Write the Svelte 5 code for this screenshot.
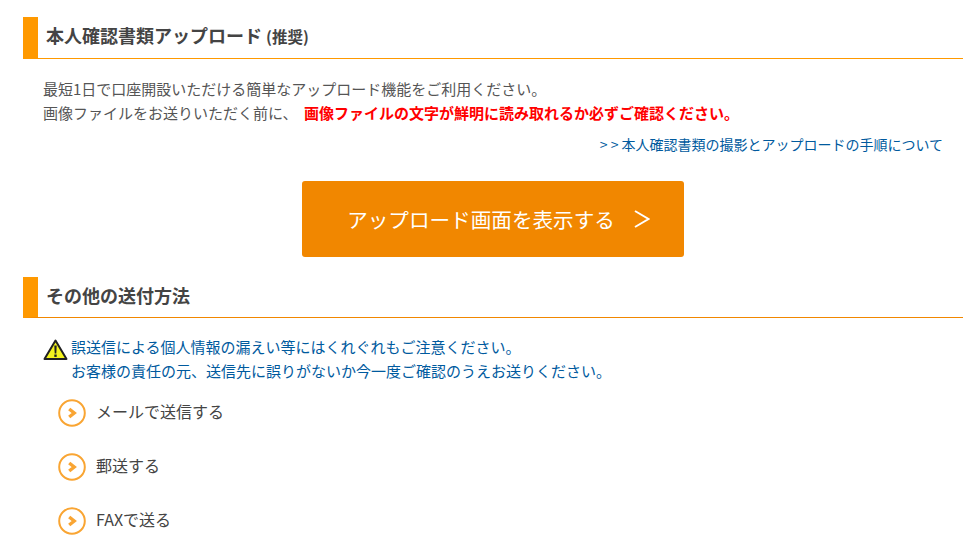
<script>
	const methods = ['メールで送信する', '郵送する', 'FAXで送る']
</script>

<main>
	<h2><span>本人確認書類アップロード</span> <small>(推奨)</small></h2>

	<div class="lead">
		<p>最短1日で口座開設いただける簡単なアップロード機能をご利用ください。</p>
		<p>画像ファイルをお送りいただく前に、 <strong>画像ファイルの文字が鮮明に読み取れるか必ずご確認ください。</strong></p>
	</div>

	<p class="guide"><a href="#guide"><span>&gt;&gt;</span>本人確認書類の撮影とアップロードの手順について</a></p>

	<div class="action">
		<a class="upload" href="#upload">
			アップロード画面を表示する
			<svg width="16" height="18" viewBox="0 0 16 18" aria-hidden="true">
				<path d="M1 1 L14.5 9 L1 17" fill="none" stroke="#fff" stroke-width="2" />
			</svg>
		</a>
	</div>

	<h2 class="second"><span>その他の送付方法</span></h2>

	<div class="notice">
		<svg class="warn" width="25" height="22" viewBox="0 0 25 22" aria-hidden="true">
			<path d="M12.5 1.5 L23.5 20 L1.5 20 Z" fill="#f5f51e" stroke="#222" stroke-width="2" stroke-linejoin="round" />
			<path d="M11.3 6.5 h2.4 l-.4 8 h-1.6 Z" fill="#222" />
			<rect x="11.3" y="15.5" width="2.4" height="2.4" fill="#222" />
		</svg>
		<p>誤送信による個人情報の漏えい等にはくれぐれもご注意ください。<br />お客様の責任の元、送信先に誤りがないか今一度ご確認のうえお送りください。</p>
	</div>

	<ul>
		{#each methods as method}
			<li>
				<svg width="28" height="28" viewBox="0 0 28 28" aria-hidden="true">
					<circle cx="14" cy="14" r="12.8" fill="#fff" stroke="#f9a533" stroke-width="2" />
					<path d="M11.2 10 L16.2 14 L11.2 18" fill="none" stroke="#f9a533" stroke-width="3.4" />
				</svg>
				<a href="#method">{method}</a>
			</li>
		{/each}
	</ul>
</main>

<style>
	:global(body) {
		margin: 0;
		background: #fff;
		font-family: "Noto Sans CJK JP", "Noto Sans", sans-serif;
	}

	main {
		width: 964px;
		height: 546px;
		padding: 17px 1px 0 23px;
		box-sizing: border-box;
		overflow: hidden;
		color: #555;
		font-size: 15px;
	}

	a {
		text-decoration: none;
	}

	p {
		margin: 0;
	}

	h2 {
		margin: 0;
		height: 41px;
		padding-left: 8px;
		border-left: 15px solid #ff9900;
		border-bottom: 1px solid #ff9900;
		font-size: 18px;
		line-height: 37px;
		font-weight: bold;
		color: #444;
	}

	h2 small {
		font-size: 15.5px;
	}

	.second {
		height: 40px;
		border-bottom-color: #f18700;
		margin-top: 20px;
	}

	.lead {
		margin: 18px 0 0 20px;
		line-height: 24px;
	}

	.lead strong {
		color: #f00;
		margin-left: 3px;
	}

	.guide {
		margin: 7px 20px 0 0;
		text-align: right;
		font-size: 14px;
		line-height: 24px;
	}

	.guide a {
		color: #005a9e;
	}

	.guide span {
		letter-spacing: 3px;
	}

	.action {
		display: flex;
		justify-content: center;
		margin-top: 25px;
	}

	.upload {
		display: flex;
		align-items: center;
		justify-content: center;
		gap: 19px;
		width: 382px;
		height: 76px;
		padding-left: 11px;
		box-sizing: border-box;
		border-radius: 3px;
		background: #f18700;
		color: #fff;
		font-size: 20.6px;
		font-weight: 400;
	}

	.notice {
		display: flex;
		margin: 17px 0 0 20px;
		color: #005a9e;
		line-height: 24px;
	}

	.warn {
		flex: none;
		margin: 4px 3px 0 0;
	}

	ul {
		list-style: none;
		margin: 16px 0 0 35px;
		padding: 0;
	}

	li {
		display: flex;
		align-items: center;
		gap: 10px;
		height: 28px;
		margin-bottom: 26px;
	}

	li a {
		color: #444;
		font-size: 16px;
		position: relative;
		top: -2px;
	}
</style>
